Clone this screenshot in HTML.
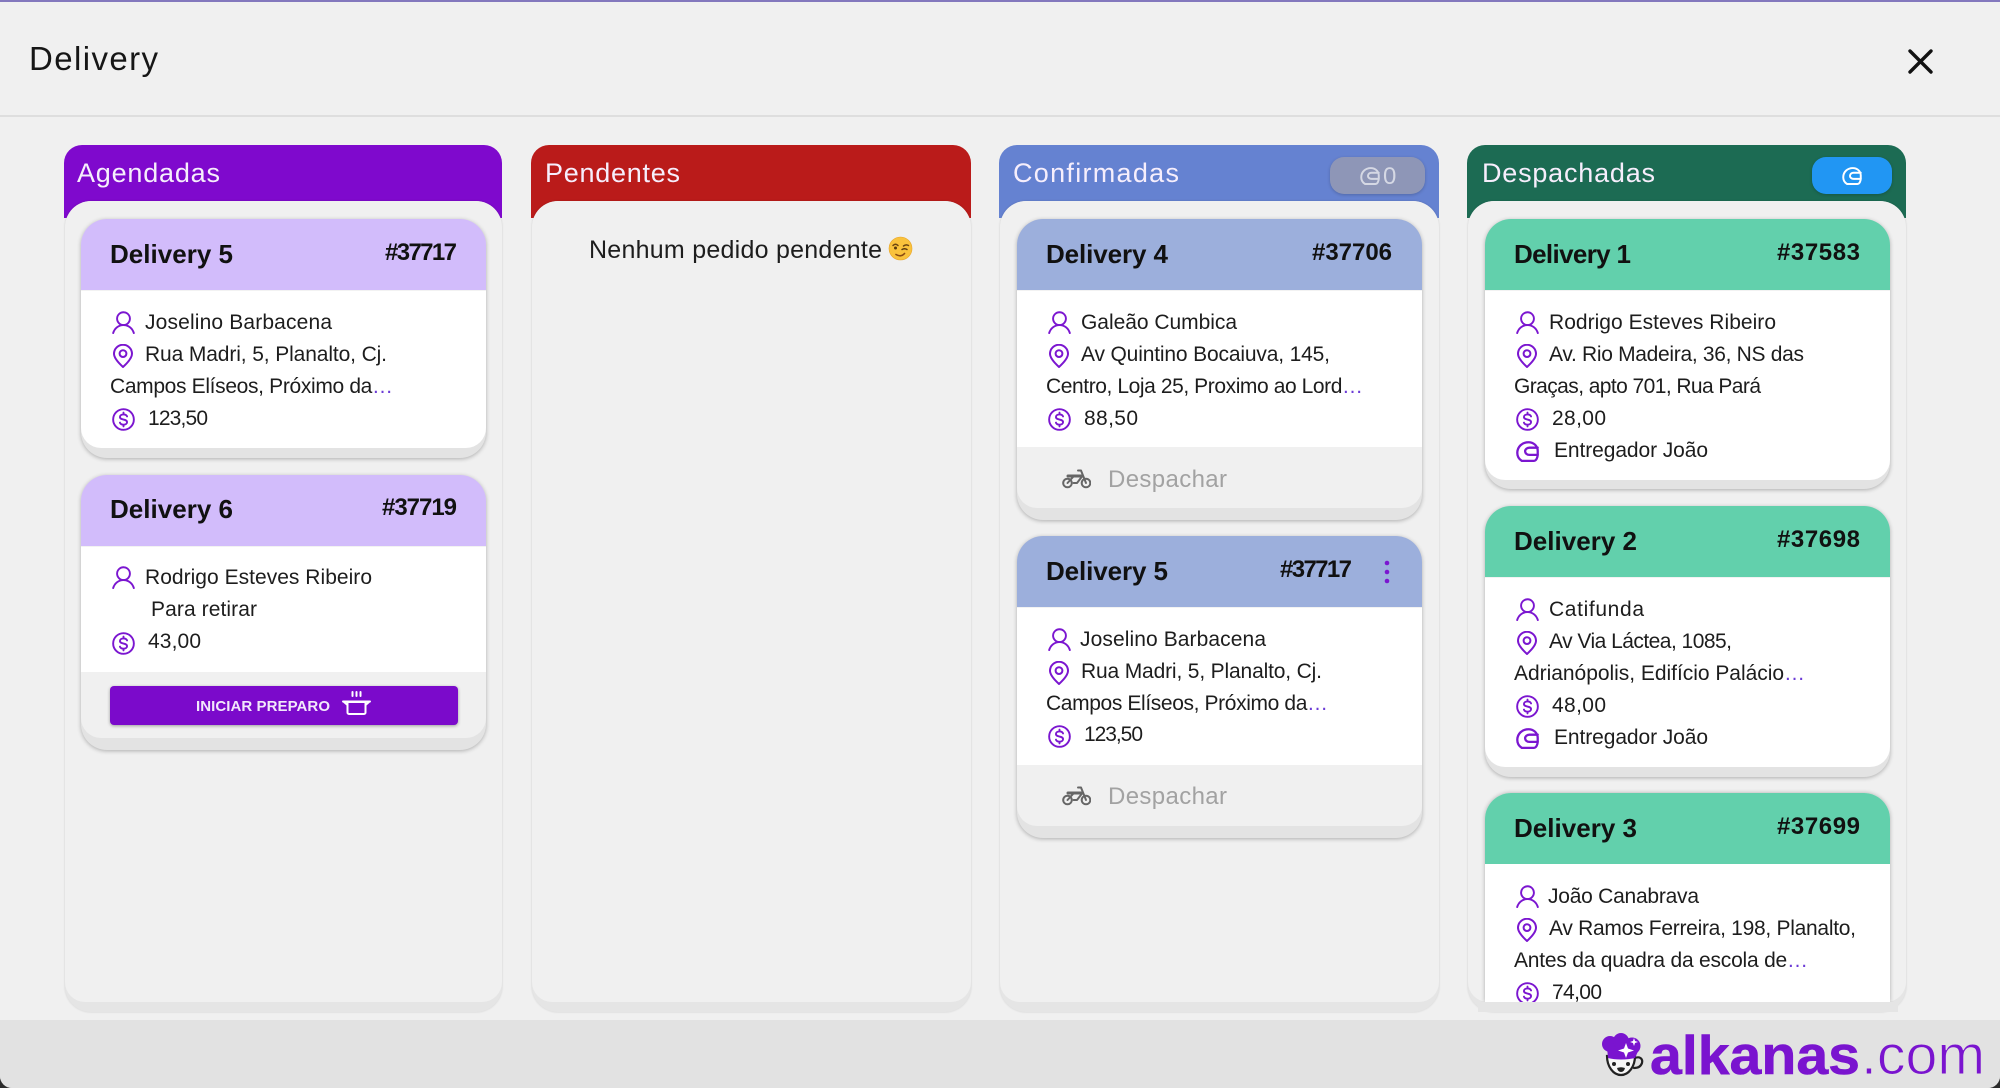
<!DOCTYPE html>
<html lang="pt-BR"><head><meta charset="utf-8"><title>Delivery</title>
<style>
html,body{margin:0;padding:0;width:2000px;height:1088px;overflow:hidden;background:#2c2c2c}
#app{position:absolute;left:0;top:0;width:2000px;height:1088px;background:#f0f0f0;border-radius:0 0 12px 12px;overflow:hidden}
.topl{position:absolute;left:0;top:0;width:2000px;height:2px;background:#8378bd}
.hl{position:absolute;left:0;top:115px;width:2000px;height:2px;background:#dedede}
.foot{position:absolute;left:0;top:1020px;width:2000px;height:68px;background:#e2e2e2}
.ch{position:absolute;top:145px;height:73px;border-radius:18px 18px 0 0}
.cb{position:absolute;top:201px;height:811px;background:#e5e5e5;border-radius:26px;box-shadow:0 0 2px rgba(0,0,0,.14);overflow:hidden}
.cb i{position:absolute;left:0;right:0;top:0;bottom:10px;background:#f0f0f0;border-radius:26px 26px 20px 20px;display:block}
.card{position:absolute;background:#e3e3e3;border-radius:26px;box-shadow:0 1px 4px rgba(0,0,0,.28)}
.h{position:absolute;left:0;right:0;top:0;height:71px;border-radius:26px 26px 0 0}
.w{position:absolute;left:0;right:0;top:71px;background:#fff;border-top:1px solid rgba(0,0,0,.05);box-sizing:border-box}
.f{position:absolute;left:0;right:0;background:#f0f0f0;border-radius:0 0 20px 20px}
.btn{position:absolute;left:110px;top:686px;width:348px;height:39px;background:#7b0acb;border-radius:4px;box-shadow:0 1px 3px rgba(0,0,0,.35)}
.bd{position:absolute;top:157px;height:37px;border-radius:14px;box-shadow:0 1px 3px rgba(0,0,0,.2)}
#cover{position:absolute;left:1478px;top:1002px;width:420px;height:10px;background:#e5e5e5}
svg.o{position:absolute;left:0;top:0}
text{font-family:"Liberation Sans",sans-serif;fill:#1d1d1d;font-size:21px}
.t{font-size:26px;font-weight:700;fill:#111}
.n{font-size:24px;font-weight:700;fill:#111}
.c{font-size:27px;fill:#f6eefc}
.d{font-size:24px;fill:#a2a2a2}
.e{fill:#6b3bd6}
.ic{fill:none;stroke:#7b16d0;stroke-width:2;stroke-linecap:round;stroke-linejoin:round}
</style></head><body>
<div id="app">
<div class="topl"></div><div class="hl"></div>

<div class="ch" style="left:64px;width:438px;background:#7f09cd"></div>
<div class="ch" style="left:531px;width:440px;background:#ba1b1a"></div>
<div class="ch" style="left:999px;width:440px;background:#6582d1"></div>
<div class="ch" style="left:1467px;width:439px;background:#1c6b53"></div>
<div class="cb" style="left:65px;width:437px"><i></i></div>
<div class="cb" style="left:532px;width:439px"><i></i></div>
<div class="cb" style="left:1000px;width:439px"><i></i></div>
<div class="cb" style="left:1468px;width:438px"><i></i></div>

<div class="bd" style="left:1330px;width:95px;background:#8e96b7"></div>
<div class="bd" style="left:1812px;width:80px;background:#2196f3"></div>

<!-- col 1 -->
<div class="card" style="left:81px;top:219px;width:405px;height:239px"><div class="h" style="background:#d2bcfb"></div><div class="w" style="height:158px;border-radius:0 0 20px 20px"></div></div>
<div class="card" style="left:81px;top:475px;width:405px;height:275px"><div class="h" style="background:#d2bcfb"></div><div class="w" style="height:126px"></div><div class="f" style="top:197px;height:66px"></div></div>
<div class="btn"></div>
<!-- col 3 -->
<div class="card" style="left:1017px;top:219px;width:405px;height:301px"><div class="h" style="background:#9cafdc"></div><div class="w" style="height:157px"></div><div class="f" style="top:228px;height:61px"></div></div>
<div class="card" style="left:1017px;top:536px;width:405px;height:302px"><div class="h" style="background:#9cafdc"></div><div class="w" style="height:158px"></div><div class="f" style="top:229px;height:61px"></div></div>
<!-- col 4 -->
<div class="card" style="left:1485px;top:219px;width:405px;height:270px"><div class="h" style="background:#62d0ac"></div><div class="w" style="height:190px;border-radius:0 0 20px 20px"></div></div>
<div class="card" style="left:1485px;top:506px;width:405px;height:271px"><div class="h" style="background:#62d0ac"></div><div class="w" style="height:190px;border-radius:0 0 20px 20px"></div></div>
<div class="card" style="left:1485px;top:793px;width:405px;height:209px;border-radius:26px 26px 0 0;background:#fff;box-shadow:0 0 4px rgba(0,0,0,.28)"><div class="h" style="background:#62d0ac"></div></div>
<div id="cover"></div>
<div class="foot"></div>

<svg class="o" width="2000" height="1088" viewBox="0 0 2000 1088" xmlns="http://www.w3.org/2000/svg">
<defs>
<clipPath id="cl"><rect x="1460" y="780" width="450" height="222"/></clipPath>
<symbol id="person" viewBox="0 0 24 24"><g class="ic"><circle cx="12" cy="8" r="6.7"/><path d="M1.2 23c1.6-5 5.600-8.300 10.800-8.300S21.200 18 22.800 23"/></g></symbol>
<symbol id="pin" viewBox="0 0 20 24"><g class="ic"><path d="M10 23C4.500 18 1 13.800 1 9.800a9 9 0 0 1 18 0C19 13.800 15.500 18 10 23z"/><circle cx="10" cy="9.600" r="3.400"/></g></symbol>
<symbol id="dollar" viewBox="0 0 24 24"><g class="ic"><circle cx="12" cy="12" r="10.800"/><path d="M15.700 8.800c-.5-1.300-1.900-2.100-3.700-2.100-2.100 0-3.700 1.100-3.700 2.700 0 3.600 7.400 1.700 7.400 5.300 0 1.600-1.600 2.700-3.700 2.700-1.800 0-3.200-.8-3.700-2.100M12 4.800v1.900M12 17.400v1.800"/></g></symbol>
<symbol id="helmet" viewBox="0 0 24 22"><g fill="none" stroke-width="2.400" stroke-linecap="round" stroke-linejoin="round" stroke="currentColor"><path d="M6 20.800C3 19 1.300 16 1.300 12.500 1.300 6 6.500 1.300 13 1.300c5 0 9.700 3.500 9.700 9v3.500c0 3.500-1.500 7-4 7z"/><path d="M22.700 7H14c-2.500 0-4.500 1.700-4.500 3.800s2 3.700 4.500 3.700h8.700"/></g></symbol>
<symbol id="moto" viewBox="0 0 29 20"><g fill="none" stroke="#666" stroke-width="2" stroke-linecap="round" stroke-linejoin="round"><circle cx="5.500" cy="14" r="4.300"/><circle cx="24" cy="14" r="4.300"/><path d="M5.500 14l6-6.500M11.500 14h3.500l5-6.500"/><path d="M6 7h14" stroke-width="3"/><path d="M16 1.500h3l5 12.500"/></g></symbol>
<symbol id="pot" viewBox="0 0 29 24"><g fill="none" stroke="#fff" stroke-width="2" stroke-linecap="round" stroke-linejoin="round"><path d="M5.500 11h18v10.500a1.500 1.500 0 0 1-1.500 1.500H7a1.500 1.500 0 0 1-1.500-1.500z"/><path d="M1 10.500h27M5.500 14L2 11M23.500 14L27 11M10.500 1v4M14.500 1v4M18.500 1v4"/></g></symbol>
</defs>

<text x="29" y="70" textLength="129" lengthAdjust="spacing" style="font-size:33px;fill:#161616">Delivery</text>
<path d="M1910 51L1931 72M1931 51L1910 72" stroke="#111" stroke-width="3.400" stroke-linecap="round"/>

<text class="c" x="77" y="182" textLength="143">Agendadas</text>
<text class="c" x="545" y="182" textLength="135">Pendentes</text>
<text class="c" x="1013" y="182" textLength="166">Confirmadas</text>
<text class="c" x="1482" y="182" textLength="173">Despachadas</text>

<!-- badges -->
<use href="#helmet" x="1360" y="167" width="20" height="18" style="color:#d5d8e4"/>
<text x="1383" y="184" textLength="14" style="font-size:24px;fill:#d5d8e4">0</text>
<use href="#helmet" x="1842" y="167" width="20" height="18" style="color:#fff"/>

<!-- empty -->
<text x="589" y="258" textLength="293" style="font-size:25px">Nenhum pedido pendente</text>
<circle cx="900.500" cy="248.500" r="11.500" fill="#f9c23c"/><circle cx="900.500" cy="248.500" r="11.500" fill="none" stroke="#e8a52a" stroke-width=".6"/>
<path d="M893 245.500q2.500-2.500 5 0M903.500 246q2.500-2 5-.5" stroke="#6b4410" stroke-width="1.500" fill="none" stroke-linecap="round"/>
<circle cx="895.500" cy="248" r="1.500" fill="#5a3a0e"/>
<path d="M902 249.500q2.500-1.500 5 0" stroke="#5a3a0e" stroke-width="1.500" fill="none" stroke-linecap="round"/>
<path d="M896 254.500q5 3 8.500-1" stroke="#8a4b12" stroke-width="1.600" fill="none" stroke-linecap="round"/>

<!-- Col 1 card 1 -->
<text class="t" x="110" y="263" textLength="123">Delivery 5</text>
<text class="n" x="385" y="260" textLength="72">#37717</text>
<use href="#person" x="112" y="311" width="23" height="23"/>
<text x="145" y="329" textLength="187">Joselino Barbacena</text>
<use href="#pin" x="113" y="344" width="20" height="24"/>
<text x="145" y="361" textLength="242">Rua Madri, 5, Planalto, Cj.</text>
<text x="110" y="393" textLength="283">Campos Elíseos, Próximo da<tspan class="e">…</tspan></text>
<use href="#dollar" x="112" y="408" width="23" height="23"/>
<text x="148" y="425" textLength="60">123,50</text>

<!-- Col 1 card 2 -->
<text class="t" x="110" y="518" textLength="123">Delivery 6</text>
<text class="n" x="382" y="515" textLength="75">#37719</text>
<use href="#person" x="112" y="566" width="23" height="23"/>
<text x="145" y="584" textLength="227">Rodrigo Esteves Ribeiro</text>
<text x="151" y="616" textLength="106">Para retirar</text>
<use href="#dollar" x="112" y="632" width="23" height="23"/>
<text x="148" y="648" textLength="53">43,00</text>
<text x="196" y="711" textLength="134" style="font-size:15px;font-weight:700;fill:#f2e8fb">INICIAR PREPARO</text>
<use href="#pot" x="342" y="691" width="29" height="24"/>

<!-- Col 3 card 1 -->
<text class="t" x="1046" y="263" textLength="122">Delivery 4</text>
<text class="n" x="1312" y="260" textLength="80">#37706</text>
<use href="#person" x="1048" y="311" width="23" height="23"/>
<text x="1081" y="329" textLength="156">Galeão Cumbica</text>
<use href="#pin" x="1049" y="344" width="20" height="24"/>
<text x="1081" y="361" textLength="249">Av Quintino Bocaiuva, 145,</text>
<text x="1046" y="393" textLength="317">Centro, Loja 25, Proximo ao Lord<tspan class="e">…</tspan></text>
<use href="#dollar" x="1048" y="408" width="23" height="23"/>
<text x="1084" y="425" textLength="54">88,50</text>
<use href="#moto" x="1062" y="469" width="29" height="20"/>
<text class="d" x="1108" y="487" textLength="119">Despachar</text>

<!-- Col 3 card 2 -->
<text class="t" x="1046" y="580" textLength="122">Delivery 5</text>
<text class="n" x="1280" y="577" textLength="72">#37717</text>
<circle cx="1387" cy="563" r="2.300" fill="#7b16d0"/><circle cx="1387" cy="572" r="2.300" fill="#7b16d0"/><circle cx="1387" cy="581" r="2.300" fill="#7b16d0"/>
<use href="#person" x="1048" y="628" width="23" height="23"/>
<text x="1080" y="646" textLength="186">Joselino Barbacena</text>
<use href="#pin" x="1049" y="661" width="20" height="24"/>
<text x="1081" y="678" textLength="241">Rua Madri, 5, Planalto, Cj.</text>
<text x="1046" y="710" textLength="282">Campos Elíseos, Próximo da<tspan class="e">…</tspan></text>
<use href="#dollar" x="1048" y="725" width="23" height="23"/>
<text x="1084" y="741" textLength="59">123,50</text>
<use href="#moto" x="1062" y="786" width="29" height="20"/>
<text class="d" x="1108" y="804" textLength="119">Despachar</text>

<!-- Col 4 card 1 -->
<text class="t" x="1514" y="263" textLength="117">Delivery 1</text>
<text class="n" x="1777" y="260" textLength="83">#37583</text>
<use href="#person" x="1516" y="311" width="23" height="23"/>
<text x="1549" y="329" textLength="227">Rodrigo Esteves Ribeiro</text>
<use href="#pin" x="1517" y="344" width="20" height="24"/>
<text x="1549" y="361" textLength="255">Av. Rio Madeira, 36, NS das</text>
<text x="1514" y="393" textLength="247">Graças, apto 701, Rua Pará</text>
<use href="#dollar" x="1516" y="408" width="23" height="23"/>
<text x="1552" y="425" textLength="54">28,00</text>
<use href="#helmet" x="1516" y="441" width="23" height="21" style="color:#7b16d0"/>
<text x="1554" y="457" textLength="154">Entregador João</text>

<!-- Col 4 card 2 -->
<text class="t" x="1514" y="550" textLength="123">Delivery 2</text>
<text class="n" x="1777" y="547" textLength="83">#37698</text>
<use href="#person" x="1516" y="598" width="23" height="23"/>
<text x="1549" y="616" textLength="95">Catifunda</text>
<use href="#pin" x="1517" y="631" width="20" height="24"/>
<text x="1549" y="648" textLength="183">Av Via Láctea, 1085,</text>
<text x="1514" y="680" textLength="291">Adrianópolis, Edifício Palácio<tspan class="e">…</tspan></text>
<use href="#dollar" x="1516" y="695" width="23" height="23"/>
<text x="1552" y="712" textLength="54">48,00</text>
<use href="#helmet" x="1516" y="728" width="23" height="21" style="color:#7b16d0"/>
<text x="1554" y="744" textLength="154">Entregador João</text>

<!-- Col 4 card 3 -->
<text class="t" x="1514" y="837" textLength="123">Delivery 3</text>
<text class="n" x="1777" y="834" textLength="83">#37699</text>
<use href="#person" x="1516" y="885" width="23" height="23"/>
<text x="1548" y="903" textLength="151">João Canabrava</text>
<use href="#pin" x="1517" y="918" width="20" height="24"/>
<text x="1549" y="935" textLength="307">Av Ramos Ferreira, 198, Planalto,</text>
<text x="1514" y="967" textLength="294">Antes da quadra da escola de<tspan class="e">…</tspan></text>
<g clip-path="url(#cl)"><use href="#dollar" x="1516" y="982" width="23" height="23"/></g>
<text x="1552" y="999" textLength="50">74,00</text>

<!-- logo -->
<g>
<path d="M1607 1056a14 19 0 0 0 28 0z" fill="#f6f6f6" stroke="#222" stroke-width="2.200"/>
<path d="M1635 1058c5-2 8 1 7 5-1 3-3 5-8 5" fill="none" stroke="#222" stroke-width="2.200" stroke-linecap="round"/>
<circle cx="1614" cy="1064" r="2" fill="#222"/><circle cx="1628" cy="1064" r="2" fill="#222"/>
<path d="M1617 1068q4-1.500 8 0q-1 4-4 4t-4-4z" fill="#222"/>
<g fill="#7a14cf"><circle cx="1610" cy="1044" r="8"/><circle cx="1621" cy="1041" r="8"/><circle cx="1632" cy="1046" r="8.500"/><path d="M1607 1047h33l-5 11c-8 2-20 2-27 0z"/></g>
<path d="M1626 1043l2 5.500 6 2-6 2-2 5.500-2-5.500-6-2 6-2z" fill="#fff"/>
<path d="M1634 1038l1 3 3 1-3 1-1 3-1-3-3-1 3-1z" fill="#fff"/>
</g>
<text x="1650" y="1074" textLength="210" lengthAdjust="spacingAndGlyphs" stroke="#7a14cf" stroke-width=".6" style="font-size:55px;font-weight:700;fill:#7a14cf">alkanas</text>
<text x="1861" y="1074" textLength="124" lengthAdjust="spacingAndGlyphs" stroke="#e2e2e2" stroke-width="1" style="font-size:56px;fill:#7a14cf">.com</text>
</svg>
</div>
</body></html>
